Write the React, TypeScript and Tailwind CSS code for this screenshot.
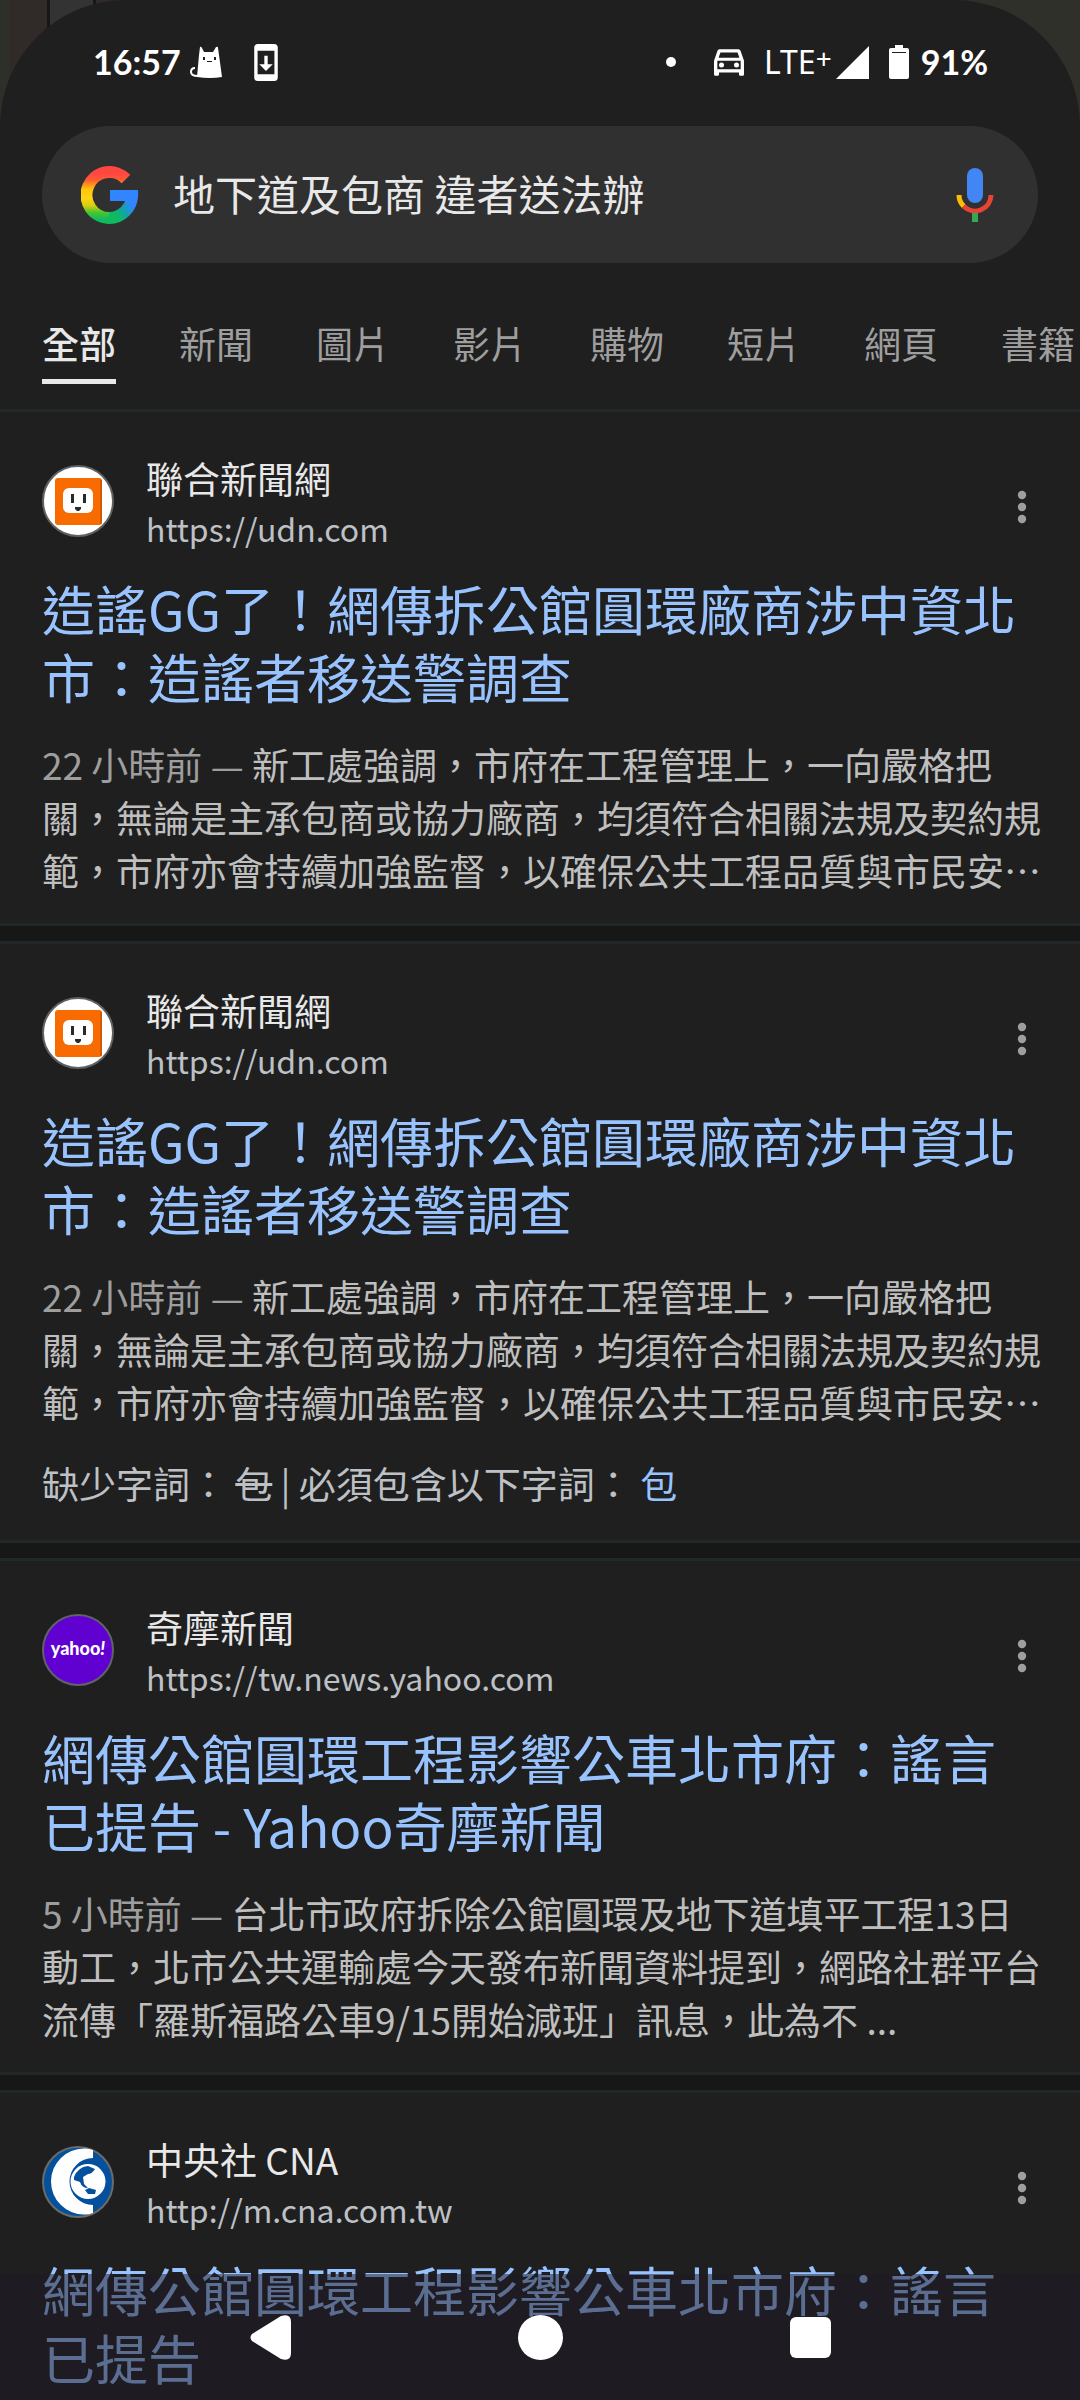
import { useState } from "react";
import type { ReactNode } from "react";

type Result = {
  id: number;
  site: string;
  url: string;
  icon: ReactNode;
  title: string[];
  age?: string;
  snippet: string[];
  missing?: string;
};

function GoogleLogo() {
  return (
    <svg viewBox="0 0 58 58" className="size-[58px] shrink-0" aria-hidden="true">
      <defs>
        <linearGradient id="g-left" gradientUnits="userSpaceOnUse" x1="16" y1="0" x2="16" y2="58">
          <stop offset="0.12" stopColor="#ff4641" />
          <stop offset="0.24" stopColor="#ff5a35" />
          <stop offset="0.4" stopColor="#ffc60a" />
          <stop offset="0.56" stopColor="#ffd314" />
          <stop offset="0.68" stopColor="#d5cf10" />
          <stop offset="0.8" stopColor="#4cc52c" />
          <stop offset="0.92" stopColor="#0ebc5f" />
        </linearGradient>
        <linearGradient id="g-right" gradientUnits="userSpaceOnUse" x1="29" y1="52" x2="52" y2="36">
          <stop offset="0.2" stopColor="#0ebc5f" />
          <stop offset="0.55" stopColor="#10a4a4" />
          <stop offset="0.9" stopColor="#3186ff" />
        </linearGradient>
      </defs>
      <path d="M45 13A23 23 0 1 0 29 52" fill="none" stroke="url(#g-left)" strokeWidth="12" />
      <path d="M28 52A23 23 0 0 0 51 29" fill="none" stroke="url(#g-right)" strokeWidth="12" />
      <path d="M29 24H57Q57.400 28 57 32L45 35H29Z" fill="#3186ff" />
    </svg>
  );
}

function MicIcon() {
  return (
    <svg viewBox="0 0 38 54" className="h-[54px] w-[38px]" aria-hidden="true">
      <rect x="11" y="0" width="16" height="35" rx="8" fill="#4285f4" />
      <path d="M3 27A16 16 0 0 0 7.700 38.300" fill="none" stroke="#fbbc04" strokeWidth="5" />
      <path d="M7.700 38.300A16 16 0 0 0 35 27" fill="none" stroke="#ea4335" strokeWidth="5" />
      <rect x="16" y="45" width="6" height="9" fill="#34a853" />
    </svg>
  );
}

function StatusBar() {
  return (
    <div className="flex h-[124px] items-center justify-between pl-[93px] pr-[92px] text-white">
      <div className="flex items-center">
        <span className="w-[97px] font-['Lato'] text-[34px] font-bold leading-none">16:57</span>
        <svg viewBox="0 0 32 32" className="size-8" aria-hidden="true">
          <path
            d="M10 1Q11 0 12 2L14 6H23L26 1Q28 0 28 2L29 9L32 31Q20 33 7 31L9 9Z"
            fill="currentColor"
          />
          <path d="M5 22Q1 22 1 26Q1 30 8 30" fill="none" stroke="currentColor" strokeWidth="2" />
          <path d="M13 11h2v3h-2zM24 11h2v3h-2zM17 15h5v1h-5z" fill="#1f1f1f" />
        </svg>
        <svg viewBox="5 1 14 22" className="ml-8 h-[37px] w-6" aria-hidden="true">
          <path
            d="M17 1.010L7 1c-1.100 0-2 .9-2 2v18c0 1.100.9 2 2 2h10c1.100 0 2-.9 2-2V3c0-1.100-.9-1.990-2-1.990zM17 19H7V5h10v14zm-1-6h-3V8h-2v5H8l4 4 4-4z"
            fill="currentColor"
          />
        </svg>
      </div>
      <div className="flex items-center">
        <span className="size-[10px] rounded-full bg-white" />
        <svg viewBox="3 5 18 16" className="ml-[38px] h-[27px] w-[30px]" aria-hidden="true">
          <path
            d="M18.920 6.010C18.720 5.420 18.160 5 17.500 5h-11c-.66 0-1.210.42-1.420 1.010L3 12v8c0 .55.45 1 1 1h1c.55 0 1-.45 1-1v-1h12v1c0 .55.45 1 1 1h1c.55 0 1-.45 1-1v-8l-2.080-5.990zM6.850 7h10.290l1.080 3.110H5.770L6.850 7zM19 17H5v-5h14v5z"
            fill="currentColor"
          />
          <circle cx="7.500" cy="14.500" r="1.500" fill="currentColor" />
          <circle cx="16.500" cy="14.500" r="1.500" fill="currentColor" />
        </svg>
        <span className="ml-5 flex items-start font-['Noto_Sans'] leading-none">
          <span className="text-[32px]">LTE</span>
          <span className="text-[28px] leading-[24px]">+</span>
        </span>
        <svg viewBox="0 0 33 33" className="ml-1 size-[33px]" aria-hidden="true">
          <path d="M33 0V33H0Z" fill="currentColor" />
        </svg>
        <svg viewBox="0 0 20 34" className="ml-5 h-[34px] w-5" aria-hidden="true">
          <path d="M6 0h8v3h4q2 0 2 2v27q0 2-2 2H2q-2 0-2-2V5q0-2 2-2h4z" fill="currentColor" />
          <path d="M3 7h14v1H3z" fill="#1f1f1f" />
        </svg>
        <span className="ml-3 font-['Lato'] text-[34px] font-bold leading-none">91%</span>
      </div>
    </div>
  );
}

function SearchBox() {
  const [query, setQuery] = useState("地下道及包商 違者送法辦");

  return (
    <form
      role="search"
      onSubmit={(event) => event.preventDefault()}
      className="mx-[42px] mt-[2px] flex h-[137px] items-center rounded-full bg-[#303030] pl-[39px] pr-11"
    >
      <GoogleLogo />
      <input
        type="text"
        aria-label="搜尋"
        value={query}
        onChange={(event) => setQuery(event.target.value)}
        className="ml-[34px] min-w-0 flex-1 bg-transparent pb-1 text-[42px] leading-[64px] text-[#e8e8e8] outline-none"
      />
      <button type="button" aria-label="語音搜尋">
        <MicIcon />
      </button>
    </form>
  );
}

const tabs = ["全部", "新聞", "圖片", "影片", "購物", "短片", "網頁", "書籍"];

function Tabs() {
  const [active, setActive] = useState("全部");

  return (
    <nav className="flex h-[149px] gap-[63px] overflow-hidden border-b-3 border-[#22272a] pl-[42px] pt-[52px]">
      {tabs.map((tab) => (
        <button
          key={tab}
          type="button"
          onClick={() => setActive(tab)}
          className={
            tab === active
              ? "h-[69px] shrink-0 border-b-5 border-[#e8e8e8] pb-2 text-[37px] font-medium leading-[56px] text-[#e8e8e8]"
              : "h-[69px] shrink-0 border-b-5 border-transparent pb-2 text-[37px] leading-[56px] text-[#9e9e9e]"
          }
        >
          {tab}
        </button>
      ))}
    </nav>
  );
}

function UdnIcon() {
  return (
    <svg viewBox="0 0 72 72" className="size-[72px]" aria-hidden="true">
      <circle cx="36" cy="36" r="35" fill="#fff" stroke="#5f6062" strokeWidth="2" />
      <rect x="13" y="13" width="47" height="47" rx="3" fill="#f76b00" />
      <path d="M59 15v44" stroke="#b04a00" strokeWidth="1" />
      <rect x="21" y="23" width="30" height="25" rx="6" fill="#fff" />
      <path d="M29 29h3v9h-3zM41 29h3v9h-3zM33 42h6v2l-2 2h-2l-2-2z" fill="#2a2a2a" />
    </svg>
  );
}

function YahooIcon() {
  return (
    <span className="flex size-[72px] items-center justify-center rounded-full border-2 border-[#5f6368] bg-[#6001d2] pb-1 font-['Lato'] text-[18px] font-black leading-none text-white">
      yahoo<i>!</i>
    </span>
  );
}

function CnaIcon() {
  return (
    <svg viewBox="0 0 72 72" className="size-[72px]" aria-hidden="true">
      <circle cx="36" cy="36" r="35" fill="#04509c" stroke="#6b6b68" strokeWidth="2" />
      <path d="M51 4Q46 2 42 2.500A33 33 0 0 0 42 68.500Q46 69 51 67V59A23.500 23.500 0 1 1 51 12Z" fill="#fff" />
      <circle cx="46" cy="35.500" r="17.500" fill="#fff" />
      <path
        d="M32 31Q36 21 46 20L53 23Q50 28 46 28L41 31L42 38L46 42Q40 42 38 36L32 34ZM43 44L47 42L54 44L53 48L46 48Z"
        fill="#04509c"
      />
    </svg>
  );
}

const results: Result[] = [
  {
    id: 1,
    site: "聯合新聞網",
    url: "https://udn.com",
    icon: <UdnIcon />,
    title: ["造謠GG了！網傳拆公館圓環廠商涉中資北", "市：造謠者移送警調查"],
    age: "22 小時前",
    snippet: [
      "新工處強調，市府在工程管理上，一向嚴格把",
      "關，無論是主承包商或協力廠商，均須符合相關法規及契約規",
      "範，市府亦會持續加強監督，以確保公共工程品質與市民安⋯",
    ],
  },
  {
    id: 2,
    site: "聯合新聞網",
    url: "https://udn.com",
    icon: <UdnIcon />,
    title: ["造謠GG了！網傳拆公館圓環廠商涉中資北", "市：造謠者移送警調查"],
    age: "22 小時前",
    snippet: [
      "新工處強調，市府在工程管理上，一向嚴格把",
      "關，無論是主承包商或協力廠商，均須符合相關法規及契約規",
      "範，市府亦會持續加強監督，以確保公共工程品質與市民安⋯",
    ],
    missing: "包",
  },
  {
    id: 3,
    site: "奇摩新聞",
    url: "https://tw.news.yahoo.com",
    icon: <YahooIcon />,
    title: ["網傳公館圓環工程影響公車北市府：謠言", "已提告 - Yahoo奇摩新聞"],
    age: "5 小時前",
    snippet: [
      "台北市政府拆除公館圓環及地下道填平工程13日",
      "動工，北市公共運輸處今天發布新聞資料提到，網路社群平台",
      "流傳「羅斯福路公車9/15開始減班」訊息，此為不 ...",
    ],
  },
  {
    id: 4,
    site: "中央社 CNA",
    url: "http://m.cna.com.tw",
    icon: <CnaIcon />,
    title: ["網傳公館圓環工程影響公車北市府：謠言", "已提告"],
    snippet: [],
  },
];

function ResultCard({ result }: { result: Result }) {
  return (
    <article className="whitespace-nowrap bg-[#1f1f1f] pb-[26px] pl-[42px] pr-10 pt-[37px]">
      <div className="flex items-center">
        {result.icon}
        <div className="ml-8 flex-1 pt-1 leading-[50px]">
          <p className="text-[37px] text-[#e8e8e8]">{result.site}</p>
          <p className="text-[32px] text-[#bdc1c6]">{result.url}</p>
        </div>
        <button type="button" aria-label="更多選項" className="px-3 pt-3">
          <svg viewBox="0 0 12 34" className="h-[34px] w-3" fill="#9e9e9e" aria-hidden="true">
            <circle cx="6" cy="5" r="4.200" />
            <circle cx="6" cy="17" r="4.200" />
            <circle cx="6" cy="29" r="4.200" />
          </svg>
        </button>
      </div>

      <h3 className="mt-[21px] text-[53px] leading-[68px] text-[#99c3ff]">
        <a href={result.url}>
          {result.title.map((line) => (
            <span key={line} className="block">
              {line}
            </span>
          ))}
        </a>
      </h3>

      {result.snippet.length > 0 ? (
        <p className="mt-7 text-[37px] leading-[53px] text-[#bfbfbf]">
          {result.snippet.map((line, index) => (
            <span key={line} className="block">
              {index === 0 ? <span className="text-[#9e9e9e]">{result.age} — </span> : null}
              {line}
            </span>
          ))}
        </p>
      ) : null}

      {result.missing ? (
        <p className="mb-1 mt-7 text-[37px] leading-[53px] text-[#bdc1c6]">
          缺少字詞： <s>{result.missing}</s> | 必須包含以下字詞：{" "}
          <a href="#must-include" className="text-[#99c3ff]">
            {result.missing}
          </a>
        </p>
      ) : null}
    </article>
  );
}

function NavigationBar() {
  return (
    <div className="fixed inset-x-0 bottom-0 h-[126px] bg-[#1d1926]/50 px-[12.5%]">
      <div className="grid h-full grid-cols-3 place-items-center">
        <button type="button" aria-label="返回">
          <svg viewBox="0 0 41 45" className="h-[45px] w-[41px]" fill="#fff" aria-hidden="true">
            <path d="M2 19Q-1 22.500 2 26L31 44Q41 47 41 38V7Q41 -2 31 1Z" />
          </svg>
        </button>
        <button type="button" aria-label="主畫面" className="size-[45px] rounded-full bg-white" />
        <button type="button" aria-label="最近使用" className="size-[41px] rounded-md bg-white" />
      </div>
    </div>
  );
}

export default function App() {
  return (
    <div className="relative isolate h-screen overflow-hidden bg-[#171717] font-['Noto_Sans_CJK_TC',sans-serif]">
      {/* slivers of the previous app behind the rounded sheet */}
      <div className="absolute inset-x-0 top-0 -z-10 flex h-32">
        <div className="w-[9px] bg-[#2c3029]" />
        <div className="w-[38px] bg-[#302a28]" />
        <div className="w-[3px] bg-[#171717]" />
        <div className="w-[43px] bg-[#333333]" />
        <div className="w-[3px] bg-[#171717]" />
        <div className="w-12 bg-[#302a28]" />
        <div className="flex-1 bg-[#30302b]" />
      </div>

      <header className="rounded-t-[126px] bg-[#1f1f1f]">
        <StatusBar />
        <SearchBox />
        <Tabs />
      </header>

      <main className="space-y-[15px]">
        {results.map((result, index) => (
          <div
            key={result.id}
            className={index === 0 ? "border-b-3 border-[#22272a]" : "border-y-3 border-[#22272a]"}
          >
            <ResultCard result={result} />
          </div>
        ))}
        <div className="h-32 bg-[#1f1f1f]" />
      </main>

      <NavigationBar />
    </div>
  );
}
